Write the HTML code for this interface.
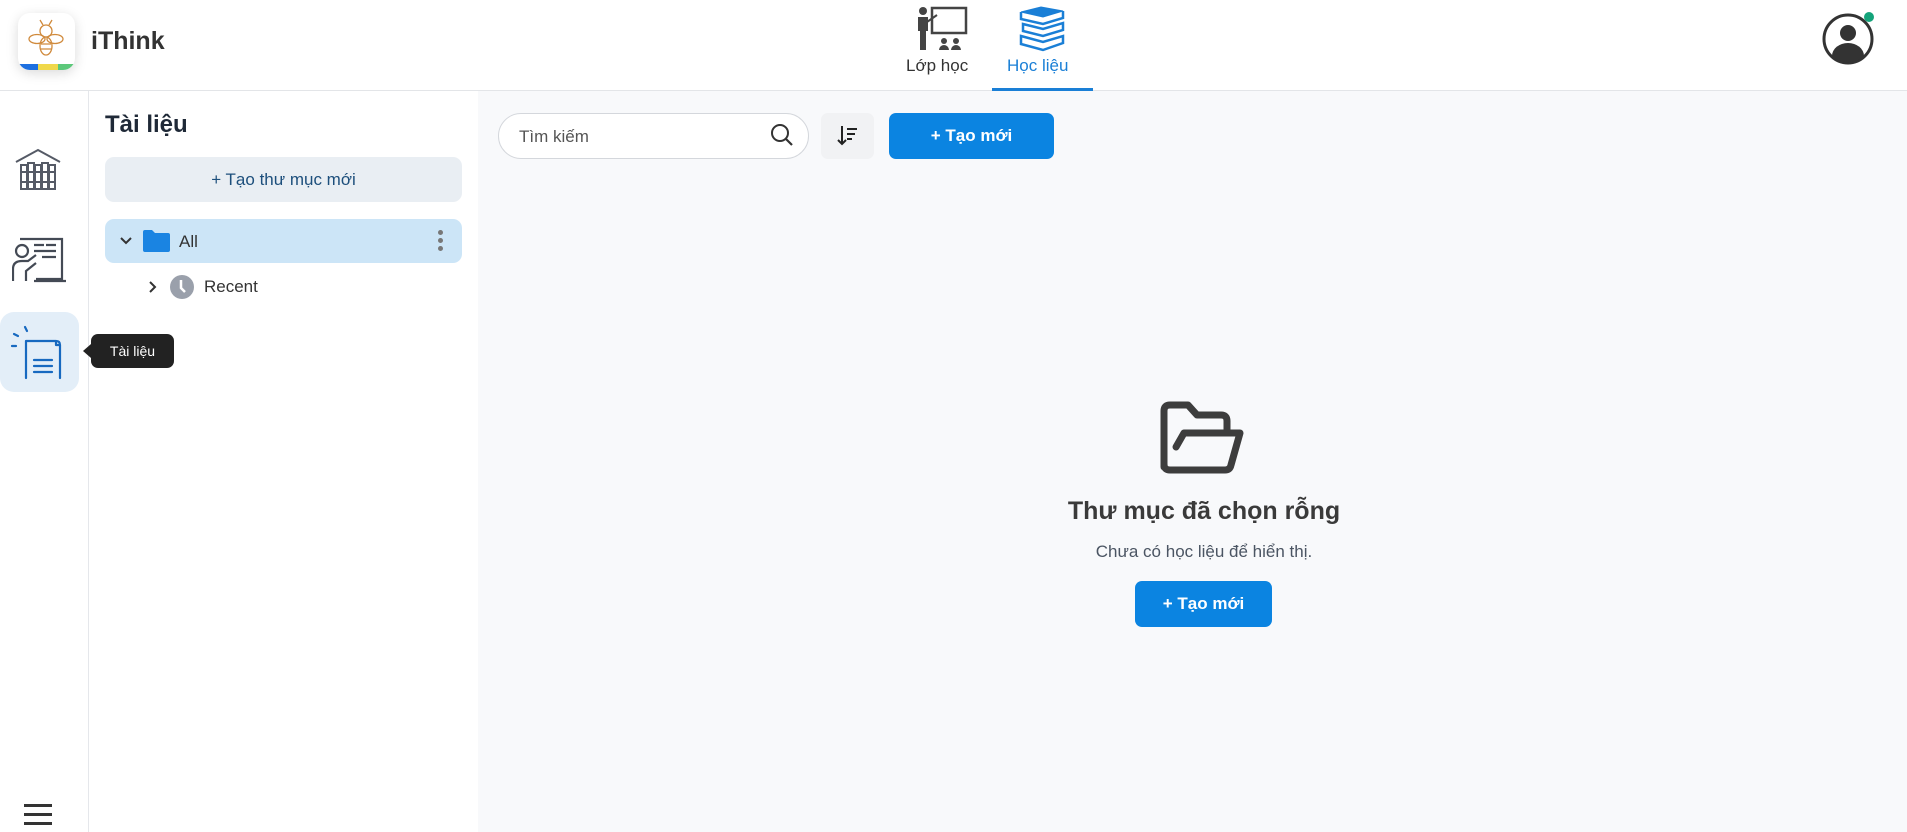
<!DOCTYPE html>
<html><head><meta charset="utf-8"><style>
*{box-sizing:border-box;margin:0;padding:0}
body{width:1907px;height:832px;overflow:hidden;font-family:"Liberation Sans",sans-serif;background:#f8f9fb;position:relative;color:#222}
.abs{position:absolute}
.header{left:0;top:0;width:1907px;height:91px;background:#fff;border-bottom:1px solid #e3e5e8}
.side{left:0;top:91px;width:89px;height:741px;background:#fff;border-right:1px solid #e5e7eb}
.panel{left:89px;top:91px;width:389px;height:741px;background:#fff}
.btn{background:#0b84e1;color:#fff;font-weight:bold;border-radius:7px;display:flex;align-items:center;justify-content:center;font-size:17px}
</style></head><body>
<div class="abs header">
  <div class="abs" style="left:18px;top:13px;width:57px;height:57px;border-radius:12px;background:#fff;box-shadow:0 3px 12px rgba(0,0,0,.15);overflow:hidden">
    <svg width="57" height="57" viewBox="0 0 57 57"><g fill="none" stroke="#d08a3c" stroke-width="1.3"><circle cx="28" cy="18" r="6"/><ellipse cx="19" cy="26" rx="8" ry="4.5"/><ellipse cx="37" cy="26" rx="8" ry="4.5"/><ellipse cx="28" cy="33" rx="6" ry="9"/><path d="M25 12l-3-5M31 12l3-5M23 31h10M23 36h10"/></g><rect x="0" y="51" width="20" height="6" fill="#1d6fe0"/><rect x="20" y="51" width="20" height="6" fill="#f0d84a"/><rect x="40" y="51" width="17" height="6" fill="#5cc87a"/></svg>
  </div>
  <div class="abs" style="left:91px;top:27px;font-size:25px;font-weight:bold;color:#333">iThink</div>
  <svg class="abs" style="left:914px;top:6px" width="56" height="46" viewBox="0 0 56 46"><circle cx="9" cy="5" r="4" fill="#444"/><path d="M4 11h10v14h-2v19h-6v-19H4z" fill="#444"/><rect x="18" y="2" width="34" height="25" fill="none" stroke="#444" stroke-width="2.5"/><path d="M13 16l10-7" stroke="#444" stroke-width="2"/><circle cx="30" cy="35" r="3" fill="#444"/><circle cx="42" cy="35" r="3" fill="#444"/><path d="M25 44a5 5 0 0 1 10 0zM37 44a5 5 0 0 1 10 0z" fill="#444"/></svg>
  <div class="abs" style="left:906px;top:56px;font-size:17px;color:#333">Lớp học</div>
  <svg class="abs" style="left:1017px;top:6px" width="52" height="46" viewBox="0 0 52 46"><g fill="#1a7fd6" stroke="#1a7fd6"><path d="M4 6l20-5 22 4-20 6z"/><path d="M4 6v7l22 5 20-6V5" fill="none" stroke-width="2.5"/><path d="M6 18l20 5 20-6v7l-20 6-20-5z" fill="none" stroke-width="2.5"/><path d="M4 30l22 6 20-6v7l-20 7-22-6z" fill="none" stroke-width="2.5"/></g></svg>
  <div class="abs" style="left:1007px;top:56px;font-size:17px;color:#1a7fd6">Học liệu</div>
  <div class="abs" style="left:992px;top:88px;width:101px;height:3px;background:#1a7fd6"></div>
  <svg class="abs" style="left:1821px;top:12px" width="56" height="54" viewBox="0 0 56 54"><circle cx="27" cy="27" r="24" fill="#fff" stroke="#333" stroke-width="3"/><circle cx="27" cy="21" r="8" fill="#333"/><path d="M11 44a16 13 0 0 1 32 0 24 24 0 0 1-32 0z" fill="#333"/><circle cx="48" cy="5" r="5" fill="#14a37a"/></svg>
</div>
<div class="abs side">
  <svg class="abs" style="left:15px;top:57px" width="46" height="43" viewBox="0 0 46 43"><g fill="none" stroke="#555a66" stroke-width="2"><path d="M1 14L23 2l22 12"/><rect x="6" y="17" width="6" height="24"/><rect x="13" y="15" width="6" height="26"/><rect x="20" y="17" width="6" height="24"/><rect x="27" y="15" width="6" height="26"/><rect x="34" y="17" width="6" height="24"/><path d="M6 24h34M6 34h34"/></g></svg>
  <svg class="abs" style="left:12px;top:146px" width="54" height="50" viewBox="0 0 54 50"><g fill="none" stroke="#444a55" stroke-width="2.2"><path d="M8 2h42v40H24"/><circle cx="10" cy="14" r="6"/><path d="M1 44V32q0-8 9-8h6l8-6M14 44V34l10-8"/><path d="M22 8h10M34 8h10M22 14h22M30 20h14"/><path d="M22 44h32"/></g></svg>
  <div class="abs" style="left:0;top:221px;width:79px;height:80px;border-radius:14px;background:#e3eef8"></div>
  <svg class="abs" style="left:10px;top:233px" width="56" height="56" viewBox="0 0 56 56"><g fill="none" stroke="#1769c0" stroke-width="2.2" stroke-linecap="round" stroke-linejoin="round"><path d="M16 17v37M16 17h30q4 0 4 4v33M50 21q0-4-4-4v4z"/><path d="M24 36h18M24 42h18M24 48h18"/><path d="M15 3l2 4M4 10l4 2M2 22h4"/></g></svg>
  <div class="abs" style="left:24px;top:713px;width:28px;height:2.5px;background:#333;box-shadow:0 9px 0 #333,0 18px 0 #333"></div>
</div>
<div class="abs panel">
  <div class="abs" style="left:16px;top:20px;font-size:24px;font-weight:bold;color:#1f2937">Tài liệu</div>
  <div class="abs" style="left:16px;top:66px;width:357px;height:45px;border-radius:9px;background:#e9eef3;color:#1d4f7c;font-size:17px;display:flex;align-items:center;justify-content:center">+ Tạo thư mục mới</div>
  <div class="abs" style="left:16px;top:128px;width:357px;height:44px;border-radius:9px;background:#cce5f7"></div>
  <svg class="abs" style="left:30px;top:143px" width="14" height="14" viewBox="0 0 14 14"><path d="M2 4l5 5 5-5" fill="none" stroke="#333" stroke-width="2"/></svg>
  <svg class="abs" style="left:54px;top:139px" width="27" height="22" viewBox="0 0 27 22"><path d="M0 2q0-2 2-2h7l3 3h13q2 0 2 2v15q0 2-2 2H2q-2 0-2-2z" fill="#1a84e2"/></svg>
  <div class="abs" style="left:90px;top:141px;font-size:17px;color:#333">All</div>
  <div class="abs" style="left:349px;top:139px;width:5px;height:5px;border-radius:50%;background:#777;box-shadow:0 8px 0 #777,0 16px 0 #777"></div>
  <svg class="abs" style="left:57px;top:189px" width="14" height="14" viewBox="0 0 14 14"><path d="M4 2l5 5-5 5" fill="none" stroke="#333" stroke-width="2"/></svg>
  <svg class="abs" style="left:81px;top:184px" width="24" height="24" viewBox="0 0 24 24"><circle cx="12" cy="12" r="12" fill="#9aa0ab"/><path d="M11 5v8l4 4" stroke="#fff" stroke-width="2.5" fill="none"/></svg>
  <div class="abs" style="left:115px;top:186px;font-size:17px;color:#333">Recent</div>
</div>
<div class="abs" style="left:91px;top:334px;width:83px;height:34px;background:#222;color:#fff;border-radius:7px;font-size:14px;display:flex;align-items:center;justify-content:center">Tài liệu</div>
<div class="abs" style="left:83px;top:344px;width:0;height:0;border:7px solid transparent;border-right:8px solid #222;border-left:0"></div>

<div class="abs" style="left:498px;top:113px;width:311px;height:46px;border-radius:23px;background:#fff;border:1px solid #d4d7dc"></div>
<div class="abs" style="left:519px;top:127px;font-size:17px;color:#555">Tìm kiếm</div>
<svg class="abs" style="left:769px;top:122px" width="26" height="26" viewBox="0 0 26 26"><circle cx="11" cy="11" r="8" fill="none" stroke="#333" stroke-width="2"/><path d="M17 17l6 6" stroke="#333" stroke-width="2.2"/></svg>
<div class="abs" style="left:821px;top:113px;width:53px;height:46px;border-radius:7px;background:#f1f2f4"></div>
<svg class="abs" style="left:836px;top:124px" width="24" height="24" viewBox="0 0 24 24"><path d="M6 2v18M2 16l4 4 4-4M11 5h10M11 10h8M11 15h5" fill="none" stroke="#222" stroke-width="2"/></svg>
<div class="abs btn" style="left:889px;top:113px;width:165px;height:46px">+ Tạo mới</div>

<svg class="abs" style="left:1160px;top:401px" width="86" height="74" viewBox="0 0 86 74"><path d="M4 66V10q0-6 6-6h18l9 10h24q6 0 6 6v10M16 46l8-14h56l-9 32q-1 5-6 5H10q-6 0-6-6" fill="none" stroke="#3d3d3d" stroke-width="7" stroke-linecap="round" stroke-linejoin="round"/></svg>
<div class="abs" style="left:1000px;top:497px;width:408px;text-align:center;font-size:25px;font-weight:bold;color:#3a3a3a">Thư mục đã chọn rỗng</div>
<div class="abs" style="left:1000px;top:542px;width:408px;text-align:center;font-size:17px;color:#4b5563">Chưa có học liệu để hiển thị.</div>
<div class="abs btn" style="left:1135px;top:581px;width:137px;height:46px">+ Tạo mới</div>
</body></html>
